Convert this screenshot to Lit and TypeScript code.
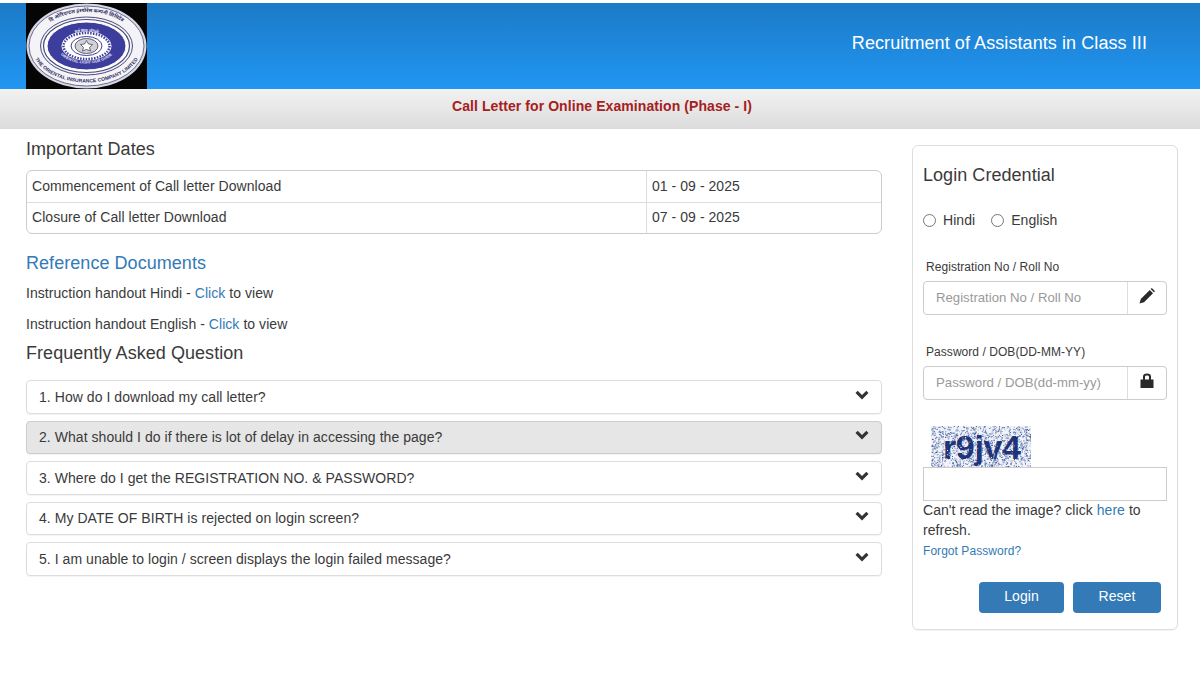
import { LitElement, html, css, svg } from "lit";
import { customElement } from "lit/decorators.js";

const FAQ = [
  "1. How do I download my call letter?",
  "2. What should I do if there is lot of delay in accessing the page?",
  "3. Where do I get the REGISTRATION NO. & PASSWORD?",
  "4. My DATE OF BIRTH is rejected on login screen?",
  "5. I am unable to login / screen displays the login failed message?",
];

function noise(count: number, colors: string[]) {
  let s = 12345 + count;
  const r = () => ((s = (s * 1103515245 + 12345) & 0x7fffffff) / 0x7fffffff);
  const out = [];
  for (let i = 0; i < count; i++) {
    const x = r() * 100;
    const y = r() * 41;
    const c = colors[Math.floor(r() * colors.length) % colors.length];
    out.push(svg`<rect x=${x.toFixed(1)} y=${y.toFixed(1)} width="1" height="1" fill=${c}></rect>`);
  }
  return out;
}

@customElement("app-root")
export class AppRoot extends LitElement {
  static styles = css`
    :host { display: block; width: 1200px; height: 675px; background: #fff; overflow: hidden;
      font-family: "Liberation Sans", Arial, sans-serif; font-size: 14px; color: #3a3a3a; letter-spacing: .05px; }
    * { box-sizing: border-box; }
    a { color: #337ab7; text-decoration: none; }
    .top { margin-top: 3px; height: 86px; background: linear-gradient(#1c7ac6, #2196f3);
      display: flex; justify-content: space-between; padding: 0 53px 0 26px; }
    .logo { width: 121px; height: 86px; display: block; }
    .title { color: #fff; font-size: 18px; line-height: 80px; letter-spacing: .08px; }
    .sub { height: 40px; background: linear-gradient(#f2f2f2, #dcdcdc); text-align: center; padding-left: 4px;
      color: #a52020; font-weight: bold; line-height: 35px; font-size: 14px; letter-spacing: .08px; }
    .main { display: flex; padding: 0 22px 0 26px; justify-content: space-between; }
    .left { width: 856px; }
    h3 { font-weight: 400; font-size: 18px; line-height: 20px; margin: 0; color: #3a3a3a; }
    .h-dates { margin-top: 10px; }
    .dates { margin-top: 11px; border: 1px solid #ccc; border-radius: 6px; }
    .row { display: grid; grid-template-columns: 619px 1fr; height: 31px; line-height: 30px; }
    .row + .row { border-top: 1px solid #ddd; line-height: 29px; }
    .row span { padding-left: 5px; }
    .row span + span { border-left: 1px solid #ddd; }
    .h-ref { margin-top: 19px; color: #337ab7; }
    .doc { line-height: 20px; margin-top: 11px; }
    .h-ref + .doc { margin-top: 10px; }
    .h-faq { margin-top: 9px; }
    .faqs { margin-top: 17px; display: flex; flex-direction: column; gap: 7px; }
    .faq { height: 33.5px; border: 1px solid #ddd; border-radius: 4px; padding: 0 12px; display: flex;
      align-items: center; justify-content: space-between; box-shadow: 0 1px 1px rgba(0,0,0,.05); }
    .faq.active { background: #e6e6e6; border-color: #ccc; }
    .faq svg { width: 14px; height: 14px; fill: #333; margin-top: -4px; }
    .panel { margin-top: 16px; width: 266px; height: 485px; border: 1px solid #ddd; border-radius: 6px;
      padding: 0 10px; box-shadow: 0 1px 1px rgba(0,0,0,.05); }
    .h-login { margin-top: 19px; }
    .lang { display: flex; align-items: center; margin-top: 25px; height: 20px; }
    .radio { width: 13px; height: 13px; border: 1px solid #767676; border-radius: 50%; }
    .lang span { margin: 0 16px 0 7px; }
    label { display: block; font-size: 12px; line-height: 14px; padding-left: 3px; }
    .l1 { margin-top: 30px; }
    .l2 { margin-top: 30px; }
    .group { margin-top: 7px; display: flex; height: 34px; border: 1px solid #ccc; border-radius: 4px; width: 244px; }
    .group .ph { flex: 1; padding-left: 12px; line-height: 32px; color: #999; font-size: 13.2px; letter-spacing: 0; }
    .group .add { width: 39px; border-left: 1px solid #ddd; display: flex; align-items: center; justify-content: center; }
    .group svg { width: 16px; height: 16px; fill: #2a2a2a; margin-top: -4px; }
    .cap { display: block; margin: 26px 0 0 8px; width: 100px; height: 41px; }
    .cap text { font-family: "Liberation Sans", sans-serif; font-weight: bold; font-size: 34px; fill: #1f3478; }
    .capin { height: 34px; width: 244px; border: 1px solid #ccc; }
    .help { line-height: 20px; margin-top: -1px; }
    .forgot { font-size: 12px; line-height: 14px; margin-top: 4px; display: block; }
    .btns { display: flex; gap: 9px; margin: 24px 0 0 56px; }
    .btn { height: 31px; background: #337ab7; color: #fff; border-radius: 4px; text-align: center; line-height: 29px; }
    .b1 { width: 85px; } .b2 { width: 88px; }
  `;

  logo() {
    const ring = "#4a4a7a";
    return html`<svg class="logo" viewBox="0 0 121 86">
      <rect width="121" height="86" fill="#050505"></rect>
      <ellipse cx="60.500" cy="43" rx="60" ry="42.500" fill="#d8d8e4"></ellipse>
      <ellipse cx="60.500" cy="43" rx="57.500" ry="40" fill="#f4f4f8" stroke=${ring} stroke-width="0.800"></ellipse>
      <defs>
        <path id="arcb" d="M5 42 A55.500 37.500 0 0 0 116 42"></path>
        <path id="arct" d="M10 42 A50.500 33 0 0 1 111 42"></path>
        <path id="arcbi" d="M31 43 A29.500 17.500 0 0 0 90 43"></path>
        <path id="arcti" d="M33 43 A27.500 14 0 0 1 88 43"></path>
      </defs>
      <text font-family="Liberation Sans" font-size="5" font-weight="bold" fill="#2f2f60"><textPath href="#arcb" startOffset="50%" text-anchor="middle">THE ORIENTAL INSURANCE COMPANY LIMITED</textPath></text>
      <text font-family="Noto Sans, Liberation Sans" font-size="5" font-weight="bold" fill="#2f2f60"><textPath href="#arct" startOffset="50%" text-anchor="middle">दि ओरिएन्टल इंश्योरेंस कम्पनी लिमिटेड</textPath></text>
      <ellipse cx="60.500" cy="43" rx="46" ry="29" fill="#f4f4f8" stroke=${ring} stroke-width="1"></ellipse>
      <ellipse cx="60.500" cy="43" rx="43" ry="26.500" fill="#fff" stroke=${ring} stroke-width="1.200"></ellipse>
      <ellipse cx="60.500" cy="43" rx="39.500" ry="24" fill="#3d3d9e" stroke="#fff" stroke-width="1"></ellipse>
      <text font-family="Liberation Sans" font-size="4" font-weight="bold" fill="#e8e8f4"><textPath href="#arcti" startOffset="50%" text-anchor="middle">सर्व मंगल मांगल्ये</textPath></text>
      <text font-family="Liberation Sans" font-size="3.800" font-weight="bold" fill="#e8e8f4"><textPath href="#arcbi" startOffset="50%" text-anchor="middle">ORIENTAL LIGHT OUR GUIDE</textPath></text>
      <ellipse cx="60.500" cy="43" rx="25" ry="14.500" fill="#fff"></ellipse>
      <ellipse cx="60.500" cy="43" rx="23" ry="13" fill="none" stroke="#3d3d9e" stroke-width="2.500" stroke-dasharray="1.500 1.300"></ellipse>
      <ellipse cx="60.500" cy="43" rx="15.500" ry="9.500" fill="#fff" stroke="#3d3d9e" stroke-width="1"></ellipse>
      <ellipse cx="60.500" cy="43" rx="11.500" ry="7.500" fill="#cfd0da" stroke="#444" stroke-width="0.800"></ellipse>
      <polygon points="60.500,37.500 62.500,41 66.500,41.500 63.500,44.500 64.500,48 60.500,46.500 56.500,48 57.500,44.500 54.500,41.500 58.500,41" fill="#fff" stroke="#333" stroke-width="0.700"></polygon>
    </svg>`;
  }

  render() {
    return html`
      <div class="top">${this.logo()}<div class="title">Recruitment of Assistants in Class III</div></div>
      <div class="sub">Call Letter for Online Examination (Phase - I)</div>
      <div class="main">
        <div class="left">
          <h3 class="h-dates">Important Dates</h3>
          <div class="dates">
            <div class="row"><span>Commencement of Call letter Download</span><span>01 - 09 - 2025</span></div>
            <div class="row"><span>Closure of Call letter Download</span><span>07 - 09 - 2025</span></div>
          </div>
          <h3 class="h-ref">Reference Documents</h3>
          <div class="doc">Instruction handout Hindi - <a>Click</a> to view</div>
          <div class="doc">Instruction handout English - <a>Click</a> to view</div>
          <h3 class="h-faq">Frequently Asked Question</h3>
          <div class="faqs">
            ${FAQ.map((q, i) => html`<div class="faq ${i === 1 ? "active" : ""}"><span>${q}</span>
              <svg viewBox="0 0 14 14"><path d="M7 11.500 0.500 5 2.700 2.800 7 7.100 11.300 2.800 13.500 5Z"></path></svg></div>`)}
          </div>
        </div>
        <div class="panel">
          <h3 class="h-login">Login Credential</h3>
          <div class="lang"><i class="radio"></i><span>Hindi</span><i class="radio"></i><span>English</span></div>
          <label class="l1">Registration No / Roll No</label>
          <div class="group"><div class="ph">Registration No / Roll No</div>
            <div class="add"><svg viewBox="0 0 16 16"><path d="M.5 15.500 1.800 11 10.800 2 14 5.200 5 14.200ZM11.700 1.100 12.800 0 16 3.200 14.900 4.300Z"></path></svg></div></div>
          <label class="l2">Password / DOB(DD-MM-YY)</label>
          <div class="group"><div class="ph">Password / DOB(dd-mm-yy)</div>
            <div class="add"><svg viewBox="0 0 16 16"><path fill-rule="evenodd" d="M1.500 6.500H4V3.500C4 1.500 5.500 .5 8 .5S12 1.500 12 3.500V6.500H14.500V15H1.500ZM6 6.500H10V3.800C10 3 9 2.500 8 2.500S6 3 6 3.800Z"></path></svg></div></div>
          <svg class="cap" viewBox="0 0 100 41">
            <rect width="100" height="41" fill="#f0f2f8"></rect>
            ${noise(1300, ["#3f5f9f", "#6f88bb", "#9fb0d4", "#2f4a8c"])}
            <text x="12" y="33" textLength="78" lengthAdjust="spacing">r9jv4</text>
            ${noise(200, ["#ffffff", "#9fb0d4"])}
          </svg>
          <div class="capin"></div>
          <div class="help">Can't read the image? click <a>here</a> to refresh.</div>
          <a class="forgot">Forgot Password?</a>
          <div class="btns"><div class="btn b1">Login</div><div class="btn b2">Reset</div></div>
        </div>
      </div>
    `;
  }
}
